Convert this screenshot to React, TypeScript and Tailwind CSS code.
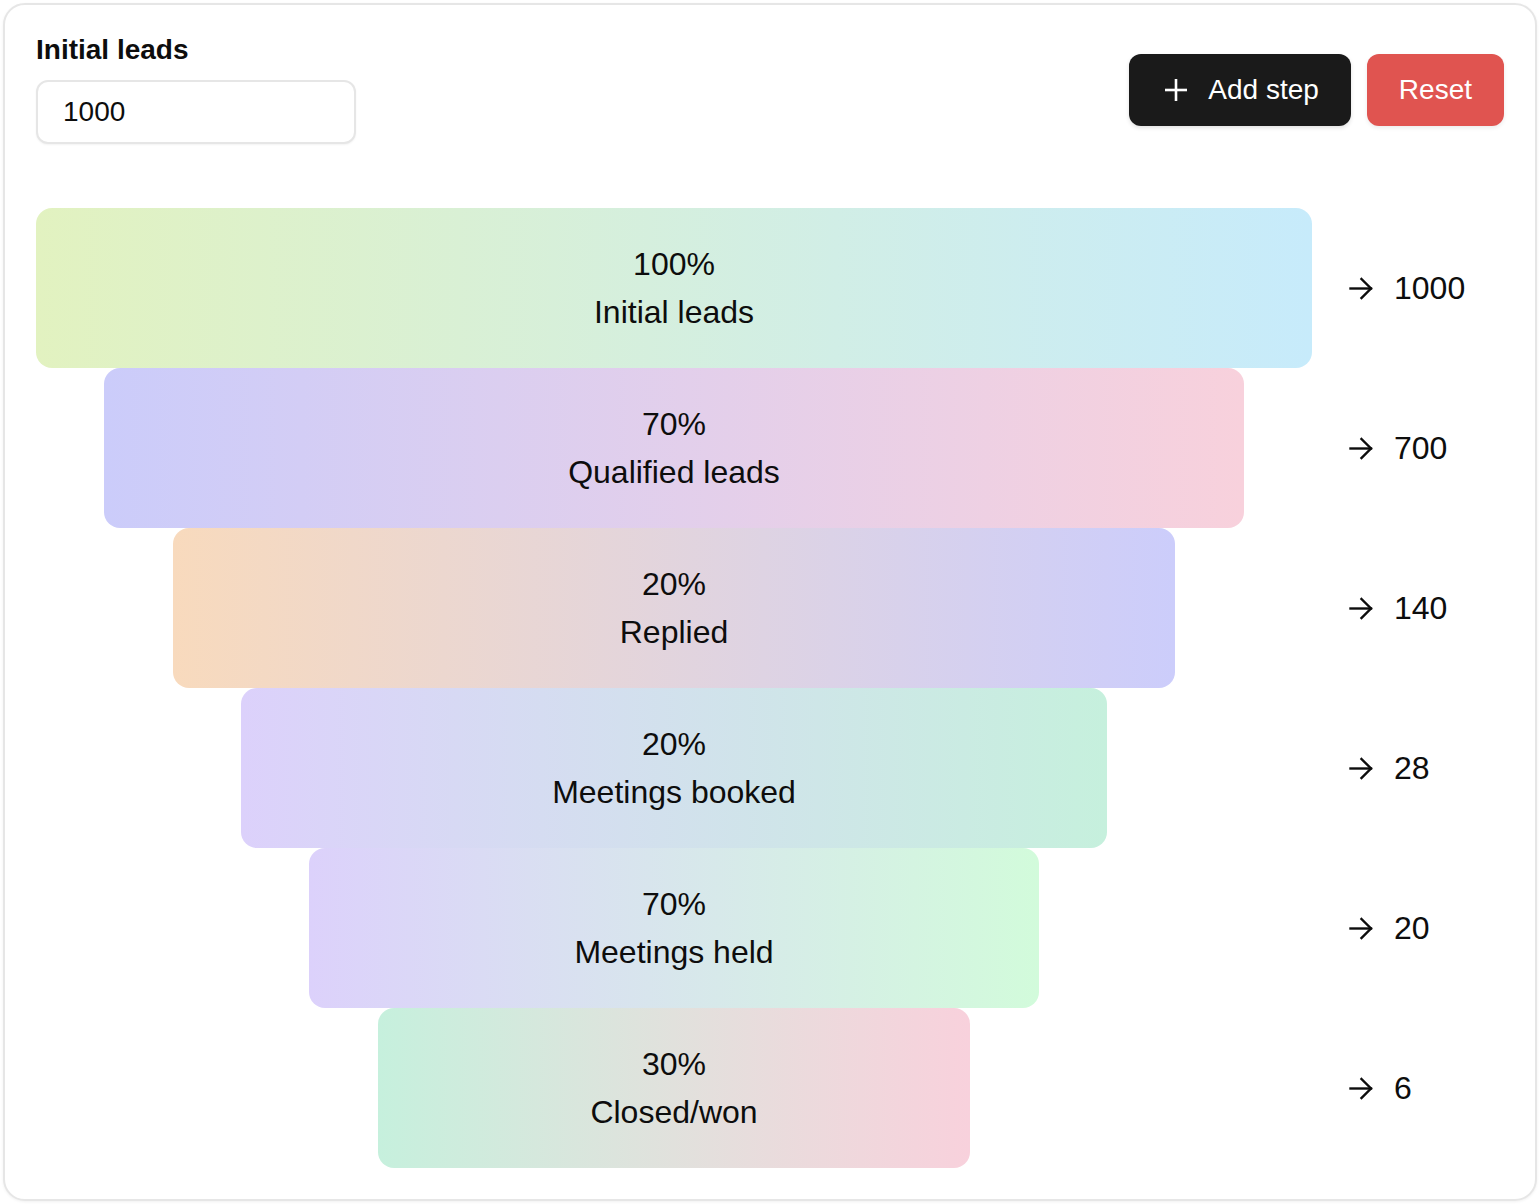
import { useState } from "react";

type Step = {
  pct: number;
  name: string;
  count: number;
  width: string;
  grad: string;
};

const steps: Step[] = [
  { pct: 100, name: "Initial leads", count: 1000, width: "w-[1276px]", grad: "from-[#e2f2c0] to-[#c7ebfb]" },
  { pct: 70, name: "Qualified leads", count: 700, width: "w-[1140px]", grad: "from-[#cbccfa] to-[#f8d1dc]" },
  { pct: 20, name: "Replied", count: 140, width: "w-[1002px]", grad: "from-[#f8dabd] to-[#cccdfb]" },
  { pct: 20, name: "Meetings booked", count: 28, width: "w-[866px]", grad: "from-[#dcd1fb] to-[#c6f0dd]" },
  { pct: 70, name: "Meetings held", count: 20, width: "w-[730px]", grad: "from-[#dcd1fb] to-[#d2fbdb]" },
  { pct: 30, name: "Closed/won", count: 6, width: "w-[592px]", grad: "from-[#c6f0dd] to-[#f8d1dc]" },
];

function Arrow() {
  return (
    <svg width="24" height="23" viewBox="0 0 24 23" fill="none" stroke="currentColor" strokeWidth="2.4" strokeLinecap="square">
      <path d="M1.5 11.5H22" />
      <path d="M12.5 2L22 11.5L12.5 21" />
    </svg>
  );
}

function Plus() {
  return (
    <svg width="24" height="24" viewBox="0 0 24 24" fill="none" stroke="currentColor" strokeWidth="2.6">
      <path d="M12 1V23" />
      <path d="M1 12H23" />
    </svg>
  );
}

export default function App() {
  const [leads, setLeads] = useState("1000");

  return (
    <div className="min-h-[1204px] bg-white p-[3px] font-['Liberation_Sans',Arial,sans-serif] text-[#0d0d0d]">
      <div className="rounded-[22px] border-2 border-[#e6e6e6] bg-white px-[31px] pt-[25px] pb-[31px] shadow-[0_1px_3px_rgba(0,0,0,0.06)]">
        {/* header */}
        <div className="flex items-start justify-between">
          <div className="flex flex-col">
            <label className="text-[28px] leading-[40px] font-bold">Initial leads</label>
            <input
              className="mt-[10px] h-[64px] w-[320px] rounded-[12px] border-2 border-[#e6e6e6] bg-white px-[25px] text-[28px] text-[#0d0d0d] shadow-[0_1px_2px_rgba(0,0,0,0.05)] outline-none"
              value={leads}
              onChange={(e) => setLeads(e.target.value)}
            />
          </div>
          <div className="mt-[24px] flex items-center gap-[16px]">
            <button className="flex h-[72px] items-center gap-[20px] rounded-[12px] bg-[#1a1a1a] pl-[35px] pr-[32px] text-[28px] text-white shadow-[0_2px_4px_rgba(0,0,0,0.12)]">
              <Plus />
              <span>Add step</span>
            </button>
            <button className="h-[72px] rounded-[12px] bg-[#e05450] px-[32px] text-[28px] text-white shadow-[0_2px_4px_rgba(0,0,0,0.08)]">
              Reset
            </button>
          </div>
        </div>

        {/* funnel */}
        <div className="mt-[64px] flex flex-col">
          {steps.map((s) => (
            <div key={s.name} className="flex items-center">
              <div className="flex w-[1276px] justify-center">
                <div
                  className={`flex h-[160px] flex-col items-center justify-center rounded-[16px] bg-gradient-to-r ${s.grad} ${s.width} text-[32px] leading-[48px]`}
                >
                  <div>{s.pct}%</div>
                  <div>{s.name}</div>
                </div>
              </div>
              <div className="flex items-center gap-[21px] pl-[37px] text-[32px]">
                <Arrow />
                <span>{s.count}</span>
              </div>
            </div>
          ))}
        </div>
      </div>
    </div>
  );
}
